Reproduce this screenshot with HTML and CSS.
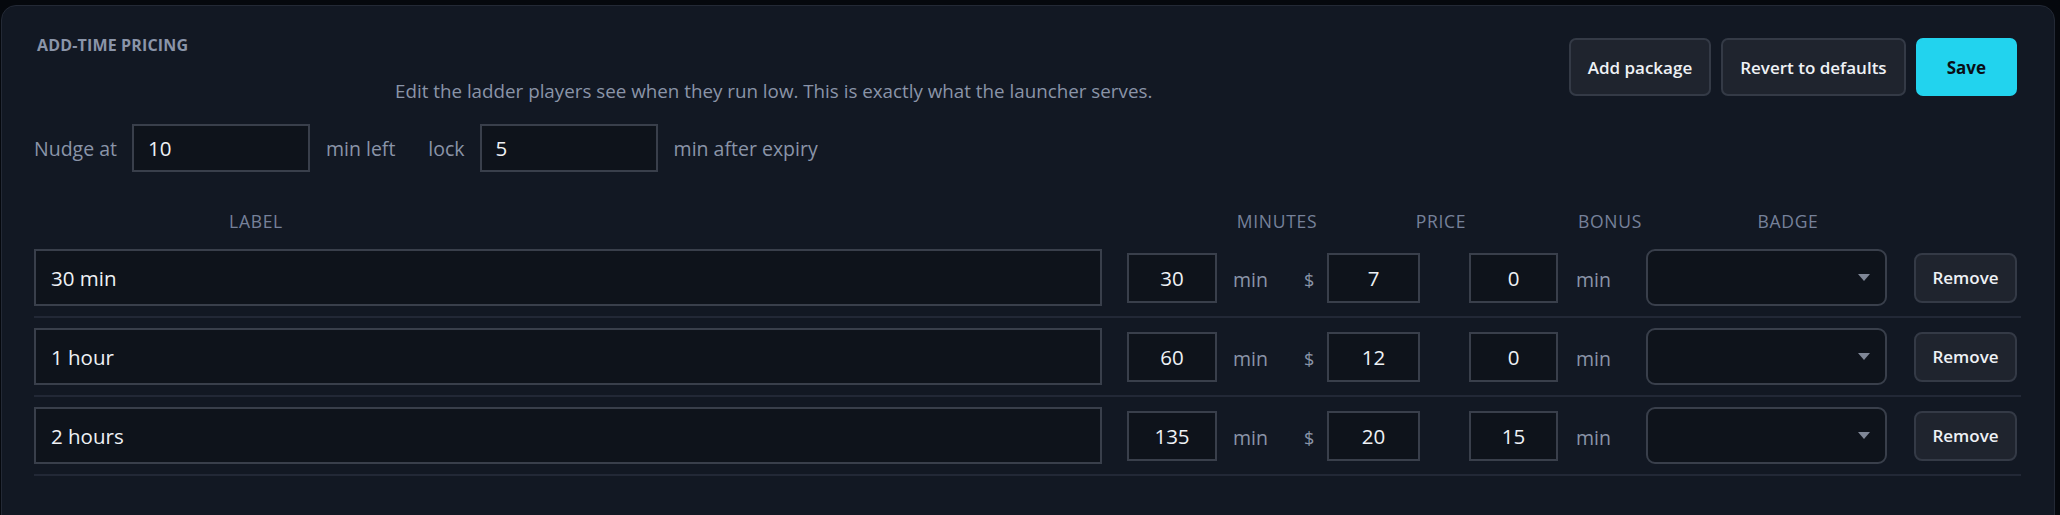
FILE: index.html
```html
<!DOCTYPE html>
<html lang="en">
<head>
    <meta charset="UTF-8">
    <meta name="viewport" content="width=device-width, initial-scale=1.0">
    <title>Add-time pricing</title>
    <link rel="stylesheet" href="styles.css">
</head>
<body>
    <div class="card">
        <div class="card-head">
            <div class="head-text">
                <h2 class="title">Add-time pricing</h2>
                <p class="subtitle">Edit the ladder players see when they run low. This is exactly what the launcher serves.</p>
            </div>
            <div class="actions">
                <button class="btn">Add package</button>
                <button class="btn">Revert to defaults</button>
                <button class="btn btn-primary">Save</button>
            </div>
        </div>

        <div class="nudge">
            <span class="muted">Nudge at</span>
            <input class="field nudge-field" type="text" value="10">
            <span class="muted nudge-after">min left</span>
            <span class="muted nudge-lock">lock</span>
            <input class="field nudge-field" type="text" value="5">
            <span class="muted">min after expiry</span>
        </div>

        <div class="table-head">
            <span class="th th-label">Label</span>
            <span class="th th-minutes">Minutes</span>
            <span class="th th-price">Price</span>
            <span class="th th-bonus">Bonus</span>
            <span class="th th-badge">Badge</span>
        </div>

        <div class="pkg-row">
            <input class="field label-field" type="text" value="30 min">
            <input class="field num-field minutes-field" type="text" value="30">
            <span class="muted unit unit-min">min</span>
            <span class="muted unit unit-dollar">$</span>
            <input class="field num-field price-field" type="text" value="7">
            <input class="field num-field bonus-field" type="text" value="0">
            <span class="muted unit unit-bonus">min</span>
            <div class="badge-select"><select><option></option><option>Popular</option><option>Best value</option></select></div>
            <button class="btn btn-remove">Remove</button>
        </div>
        <div class="pkg-row">
            <input class="field label-field" type="text" value="1 hour">
            <input class="field num-field minutes-field" type="text" value="60">
            <span class="muted unit unit-min">min</span>
            <span class="muted unit unit-dollar">$</span>
            <input class="field num-field price-field" type="text" value="12">
            <input class="field num-field bonus-field" type="text" value="0">
            <span class="muted unit unit-bonus">min</span>
            <div class="badge-select"><select><option></option><option>Popular</option><option>Best value</option></select></div>
            <button class="btn btn-remove">Remove</button>
        </div>
        <div class="pkg-row">
            <input class="field label-field" type="text" value="2 hours">
            <input class="field num-field minutes-field" type="text" value="135">
            <span class="muted unit unit-min">min</span>
            <span class="muted unit unit-dollar">$</span>
            <input class="field num-field price-field" type="text" value="20">
            <input class="field num-field bonus-field" type="text" value="15">
            <span class="muted unit unit-bonus">min</span>
            <div class="badge-select"><select><option></option><option>Popular</option><option>Best value</option></select></div>
            <button class="btn btn-remove">Remove</button>
        </div>
    </div>
</body>
</html>
```

FILE: styles.css
```css
body {
    margin: 0;
    background: #05080d;
    font-family: "Open Sans", "Noto Sans", sans-serif;
    color: #e8ebf0;
    overflow: hidden;
}
.card {
    margin: 5px 5px 0 1px;
    padding: 32px 37px 80px 32px;
    background: #121823;
    border: 1px solid #232935;
    border-radius: 15px;
}
.card-head {
    display: flex;
    justify-content: space-between;
    align-items: flex-start;
}
.title {
    margin: 0 0 0 3px;
    font-size: 16px;
    line-height: 14px;
    font-weight: 700;
    letter-spacing: 0.01em;
    text-transform: uppercase;
    color: #8a94a8;
}
.subtitle {
    margin: 27px 0 0 361px;
    font-size: 18.8px;
    line-height: 24px;
    color: #8a94a8;
}
.actions {
    display: flex;
    gap: 10px;
}
.btn {
    height: 58px;
    padding: 0 17px;
    font-family: inherit;
    font-size: 17px;
    font-weight: 600;
    color: #eef1f5;
    background: #1f242e;
    border: 2px solid #343a46;
    border-radius: 7px;
}
.btn-primary {
    padding: 0 29px;
    background: #22d3ee;
    border-color: #22d3ee;
    color: #0a0f16;
    font-weight: 700;
}
.muted {
    color: #8a94a8;
    font-size: 19.5px;
}
.field {
    box-sizing: border-box;
    font-family: inherit;
    font-size: 20.5px;
    font-weight: 500;
    color: #eef1f5;
    background: #0e131b;
    border: 2px solid #393f4b;
    border-radius: 0;
    outline: none;
}
.nudge {
    display: flex;
    align-items: center;
    margin-top: 21px;
}
.nudge-field {
    width: 178px;
    height: 48px;
    margin: 0 16px 0 15px;
    padding: 0 14px;
}
.nudge-lock {
    margin-left: 33px;
}
.table-head {
    display: grid;
    grid-template-columns: 444px 739px 120px 44px 120px 49px 120px 58px 120px;
    margin-top: 36px;
    padding-bottom: 5px;
    line-height: 26px;
}
.th {
    text-align: center;
    font-size: 17.5px;
    letter-spacing: 0.04em;
    text-transform: uppercase;
    color: #76819a;
}
.th-minutes { grid-column: 3; }
.th-price { grid-column: 5; }
.th-bonus { grid-column: 7; }
.th-badge { grid-column: 9; }
.pkg-row {
    display: flex;
    align-items: center;
    margin-right: -4px;
    padding: 10px 0;
    border-bottom: 2px solid #222836;
}
.label-field {
    width: 1068px;
    height: 57px;
    padding: 0 15px;
}
.num-field {
    height: 50px;
    text-align: center;
}
.minutes-field {
    width: 90px;
    margin-left: 25px;
}
.price-field {
    width: 93px;
    margin-left: 14px;
}
.bonus-field {
    width: 89px;
    margin-left: 49px;
}
.unit {
    padding-top: 4px;
}
.unit-min {
    width: 34px;
    margin-left: 16px;
}
.unit-dollar {
    width: 9px;
    margin-left: 37px;
    font-size: 18px;
}
.unit-bonus {
    width: 32px;
    margin-left: 18px;
}
.badge-select {
    position: relative;
    width: 241px;
    height: 57px;
    margin-left: 38px;
}
.badge-select select {
    width: 100%;
    height: 100%;
    appearance: none;
    background: #0e131b;
    border: 2px solid #393f4b;
    border-radius: 9px;
    color: transparent;
    outline: none;
}
.badge-select::after {
    content: "";
    position: absolute;
    right: 17px;
    top: 25px;
    border-left: 6px solid transparent;
    border-right: 6px solid transparent;
    border-top: 7px solid #7f8797;
}
.btn-remove {
    width: 103px;
    height: 50px;
    margin-left: 27px;
    padding: 0;
    border-radius: 8px;
}
```
